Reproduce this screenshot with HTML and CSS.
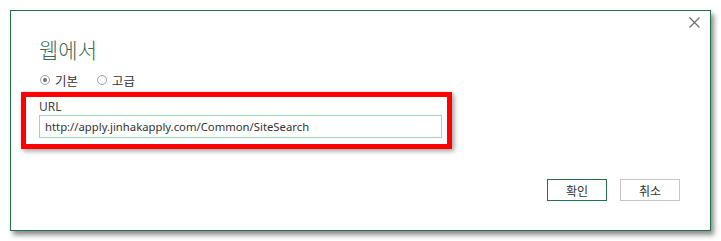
FILE: index.html
```html
<!DOCTYPE html>
<html lang="ko">
<head>
<meta charset="utf-8">
<link rel="stylesheet" href="styles.css">
</head>
<body>
<div class="dialog">
  <button class="close" aria-label="닫기">
    <svg width="11" height="11" viewBox="0 0 11 11"><path d="M0.5 0.5L10.5 10.5M10.5 0.5L0.5 10.5" stroke="#6d6d6d" stroke-width="1.2" fill="none"/></svg>
  </button>
  <h1 class="title">웹에서</h1>
  <div class="modes">
    <label class="mode"><span class="radio checked"></span>기본</label>
    <label class="mode"><span class="radio"></span>고급</label>
  </div>
  <div class="highlight">
    <div class="field-label">URL</div>
    <div class="input">http://apply.jinhakapply.com/Common/SiteSearch</div>
  </div>
  <div class="actions">
    <button class="btn primary">확인</button>
    <button class="btn">취소</button>
  </div>
</div>
</body>
</html>
```
FILE: styles.css
```css
* { box-sizing: border-box; }
html, body { margin: 0; padding: 0; background: #ffffff; }
body {
  font-family: "Segoe UI", "Noto Sans", "Noto Sans CJK KR", sans-serif;
  color: #444444;
  font-size: 12px;
}
.dialog {
  position: relative;
  margin: 10px;
  width: 701px;
  height: 221px;
  border: 1px solid #217346;
  background: #ffffff;
  box-shadow: 3px 4px 5px rgba(0,0,0,0.45);
  display: flex;
  flex-direction: column;
}
.close {
  position: absolute;
  top: 6px;
  right: 10px;
  border: 0;
  background: none;
  padding: 0;
  width: 11px;
  height: 11px;
  line-height: 0;
}
.title {
  margin: 24px 0 0 28px;
  font-size: 21px;
  font-weight: 300;
  line-height: 28px;
  color: #3d6b57;
  font-family: "Noto Sans CJK KR", sans-serif;
}
.modes {
  display: flex;
  gap: 19px;
  margin: 8px 0 0 29px;
  height: 18px;
  align-items: center;
}
.mode {
  display: flex;
  align-items: center;
  gap: 5px;
  font-family: "Noto Sans CJK KR", sans-serif;
  font-size: 12.5px;
  color: #333;
}
.radio {
  width: 10px;
  height: 10px;
  border-radius: 50%;
  border: 1px solid #a0a0a0;
  background: #fff;
  display: inline-flex;
  align-items: center;
  justify-content: center;
}
.radio.checked::after {
  content: "";
  width: 4px;
  height: 4px;
  border-radius: 50%;
  background: #707070;
}
.highlight {
  margin: 3px 0 0 10px;
  width: 431px;
  border: 5px solid #ff0000;
  padding: 2px 5px 6px 13px;
  box-shadow: 2px 2px 5px rgba(0,0,0,0.4);
}
.field-label {
  font-size: 12px;
  line-height: 16px;
  color: #444;
}
.input {
  height: 23px;
  border: 1px solid #9fd6b6;
  padding: 0 5px;
  font-size: 11.3px;
  line-height: 21px;
  color: #333;
}
.actions {
  display: flex;
  justify-content: flex-end;
  gap: 13px;
  margin: 30px 30px 0 0;
}
.btn {
  width: 60px;
  height: 22px;
  border: 1px solid #c6c6c6;
  background: #fff;
  font-family: "Noto Sans CJK KR", sans-serif;
  font-size: 12px;
  color: #333;
  padding: 0;
}
.btn.primary {
  border-color: #217346;
}
```
